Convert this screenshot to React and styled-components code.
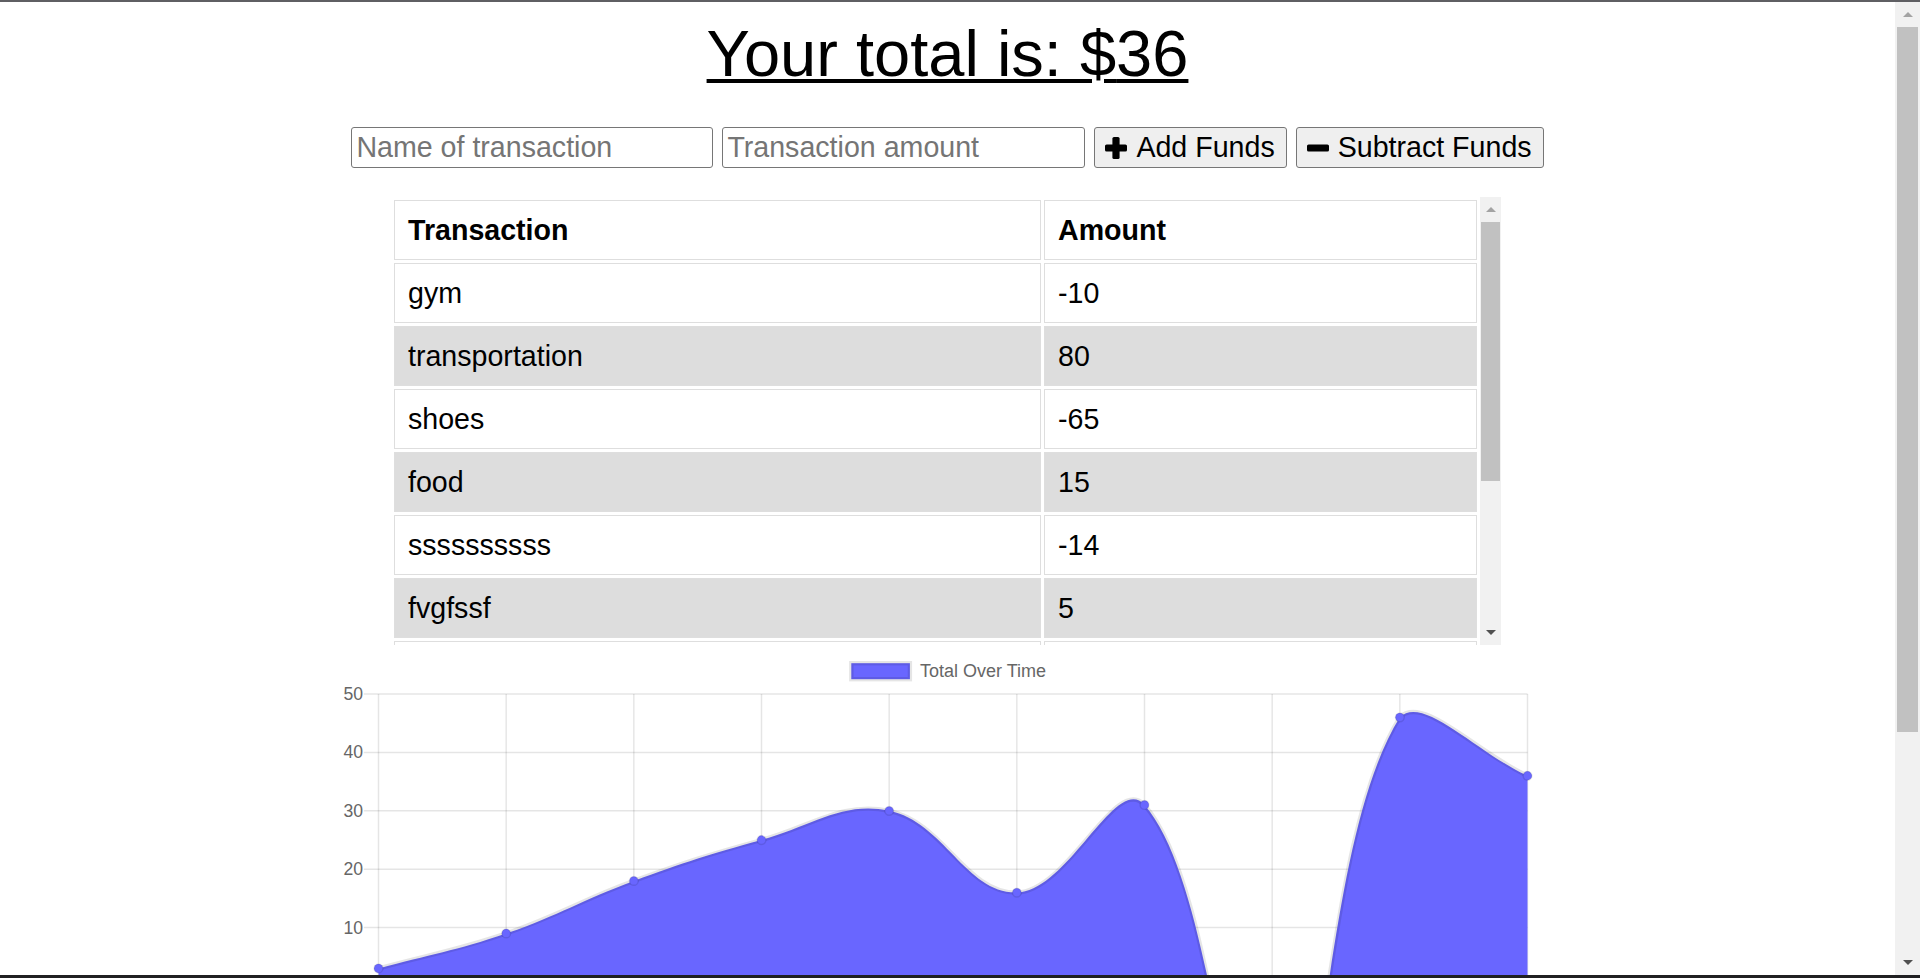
import React from 'react';
import styled, { createGlobalStyle } from 'styled-components';

const GlobalStyle = createGlobalStyle`
  html, body {
    margin: 0;
    padding: 0;
    height: 100%;
    overflow: hidden;
    background: #fff;
  }
  body {
    font-family: "Liberation Sans", Arial, sans-serif;
    color: #000;
  }
`;

// newest first, like the table shows them
const transactions = [
  { name: 'gym', value: -10 },
  { name: 'transportation', value: 80 },
  { name: 'shoes', value: -65 },
  { name: 'food', value: 15 },
  { name: 'ssssssssss', value: -14 },
  { name: 'fvgfssf', value: 5 },
  { name: 'lunch', value: 7 },
  { name: 'coffee', value: 9 },
  { name: 'books', value: 6 },
  { name: 'snack', value: 3 },
];

const total = transactions.reduce((sum, t) => sum + t.value, 0);

// chart geometry (chart.js look, scaled)
const K = 1.466;
const CHART = {
  width: 1220,
  height: 620,
  left: 40.5,
  right: 1189.5,
  top: 47,
  unit: 5.84,
  max: 50,
  min: -40,
};
const yOf = (v) => CHART.top + (CHART.max - v) * CHART.unit;
const chartBottom = yOf(CHART.min);

function buildSeries() {
  let running = 0;
  const totals = [...transactions].reverse().map((t) => (running += t.value));
  const step = (CHART.right - CHART.left) / (totals.length - 1);
  return totals.map((v, i) => ({ x: CHART.left + i * step, y: yOf(v) }));
}

const clamp = (v, lo, hi) => Math.min(hi, Math.max(lo, v));

function splinePath(pts, tension = 0.4) {
  const cps = pts.map((p, i) => {
    const prev = pts[i - 1] || p;
    const next = pts[i + 1] || p;
    const d01 = Math.hypot(p.x - prev.x, p.y - prev.y);
    const d12 = Math.hypot(next.x - p.x, next.y - p.y);
    const s01 = d01 + d12 ? d01 / (d01 + d12) : 0;
    const s12 = d01 + d12 ? d12 / (d01 + d12) : 0;
    const fa = tension * s01;
    const fb = tension * s12;
    const cap = (pt) => ({
      x: clamp(pt.x, CHART.left, CHART.right),
      y: clamp(pt.y, CHART.top, chartBottom),
    });
    return {
      prev: cap({ x: p.x - fa * (next.x - prev.x), y: p.y - fa * (next.y - prev.y) }),
      next: cap({ x: p.x + fb * (next.x - prev.x), y: p.y + fb * (next.y - prev.y) }),
    };
  });
  let d = `M ${pts[0].x} ${pts[0].y}`;
  for (let i = 1; i < pts.length; i++) {
    const a = cps[i - 1].next;
    const b = cps[i].prev;
    d += ` C ${a.x} ${a.y} ${b.x} ${b.y} ${pts[i].x} ${pts[i].y}`;
  }
  return d;
}

const Frame = styled.div`
  height: 100vh;
  display: flex;
  flex-direction: column;
`;

const TopEdge = styled.div`
  height: 2px;
  flex: none;
  background: #5f5f63;
`;

const BottomEdge = styled.div`
  height: 3px;
  flex: none;
  background: #202022;
`;

const Viewport = styled.div`
  flex: 1;
  min-height: 0;
  display: flex;
`;

const Page = styled.main`
  flex: 1;
  min-width: 0;
  overflow: hidden;
`;

const Title = styled.h1`
  margin: 15px 0 0;
  text-align: center;
  font-size: 65px;
  line-height: 74px;
  font-weight: 400;
  text-decoration: underline;
  text-decoration-thickness: 4px;
  text-underline-offset: 3px;
`;

const EntryRow = styled.form`
  margin: 36px 0 0;
  display: flex;
  justify-content: center;
  gap: 9px;
`;

const TextField = styled.input`
  box-sizing: border-box;
  width: ${(p) => p.$width}px;
  height: 41px;
  border: 1px solid #767676;
  border-radius: 3px;
  padding: 0 4px;
  font-family: "Liberation Sans", Arial, sans-serif;
  font-size: 28.6px;
  color: #000;
  background: #fff;
  outline: none;

  &::placeholder {
    color: #757575;
  }
`;

const ActionButton = styled.button`
  box-sizing: border-box;
  height: 41px;
  display: inline-flex;
  align-items: center;
  gap: 9px;
  padding: 0 11px 0 10px;
  border: 1px solid #767676;
  border-radius: 3px;
  background: #efefef;
  font-family: "Liberation Sans", Arial, sans-serif;
  font-size: 28.6px;
  color: #000;
  cursor: pointer;

  svg {
    flex: none;
    display: block;
  }
`;

const TableBox = styled.section`
  width: 1110px;
  height: 448px;
  margin: 29px auto 0;
  padding-right: 3px;
  display: flex;
`;

const TableViewport = styled.div`
  flex: 1;
  min-width: 0;
  overflow: hidden;
`;

const Table = styled.table`
  width: 100%;
  table-layout: fixed;
  border-collapse: separate;
  border-spacing: 3px;
  font-size: 28.6px;
`;

const NameCol = styled.col`
  width: 647px;
`;

const Cell = styled.td`
  border: 1px solid #dedede;
  padding: 12px 13px;
  line-height: 34px;
  text-align: left;
  vertical-align: middle;
  font-weight: ${(p) => (p.$head ? 700 : 400)};
  background: ${(p) => (p.$striped ? '#dddddd' : '#ffffff')};
  white-space: nowrap;
`;

const Rail = styled.div`
  flex: none;
  width: ${(p) => p.$width}px;
  display: flex;
  flex-direction: column;
  background: #f1f1f1;
`;

const RailButton = styled.div`
  flex: none;
  height: 25px;
  display: flex;
  align-items: center;
  justify-content: center;
`;

const Arrow = styled.span`
  width: 0;
  height: 0;
  border-left: 5px solid transparent;
  border-right: 5px solid transparent;
  ${(p) =>
    p.$up
      ? `border-bottom: 5px solid ${p.$color};`
      : `border-top: 5px solid ${p.$color};`}
`;

const RailTrack = styled.div`
  flex: 1;
  min-height: 0;
  padding: 0 ${(p) => p.$inset}px;
`;

const Thumb = styled.div`
  height: ${(p) => p.$length}px;
  background: #c1c1c1;
`;

const ChartCanvas = styled.svg`
  display: block;
  margin: 2px auto 0;
  font-family: "Liberation Sans", Arial, sans-serif;
`;

function PlusIcon() {
  return (
    <svg width="22" height="22" viewBox="0 0 22 22" aria-hidden="true">
      <rect x="7.4" y="0" width="7.2" height="22" rx="1.6" fill="#000" />
      <rect x="0" y="7.4" width="22" height="7.2" rx="1.6" fill="#000" />
    </svg>
  );
}

function MinusIcon() {
  return (
    <svg width="22" height="22" viewBox="0 0 22 22" aria-hidden="true">
      <rect x="0" y="7.4" width="22" height="7.2" rx="1.6" fill="#000" />
    </svg>
  );
}

function ScrollRail({ width, inset, thumb }) {
  return (
    <Rail $width={width}>
      <RailButton>
        <Arrow $up $color="#a3a3a3" />
      </RailButton>
      <RailTrack $inset={inset}>
        <Thumb $length={thumb} />
      </RailTrack>
      <RailButton>
        <Arrow $color="#505050" />
      </RailButton>
    </Rail>
  );
}

function TotalChart() {
  const pts = buildSeries();
  const line = splinePath(pts);
  const zeroY = yOf(0);
  const fill = `${line} L ${pts[pts.length - 1].x} ${zeroY} L ${pts[0].x} ${zeroY} Z`;
  const ticks = [];
  for (let v = CHART.max; v >= CHART.min; v -= 10) ticks.push(v);
  const grid = 'rgba(0,0,0,0.1)';
  const tick = 10 * K;

  return (
    <ChartCanvas width={CHART.width} height={CHART.height} viewBox={`0 0 ${CHART.width} ${CHART.height}`}>
      <rect x={513.3} y={16.2} width={58.6} height={16} fill="#6966ff" stroke={grid} strokeWidth={3 * K} />
      <text x={582} y={24} fontSize={18} fill="#666" dominantBaseline="central">
        Total Over Time
      </text>

      {ticks.map((v) => (
        <g key={v}>
          <line
            x1={CHART.left - tick}
            x2={CHART.right}
            y1={yOf(v)}
            y2={yOf(v)}
            stroke={v === 0 ? 'rgba(0,0,0,0.25)' : grid}
            strokeWidth={K}
          />
          <text x={25} y={yOf(v)} fontSize={17.6} fill="#666" textAnchor="end" dominantBaseline="central">
            {v}
          </text>
        </g>
      ))}
      {pts.map((p, i) => (
        <line key={i} x1={p.x} x2={p.x} y1={CHART.top} y2={chartBottom + tick} stroke={grid} strokeWidth={K} />
      ))}

      <path d={fill} fill="#6966ff" />
      <path d={line} fill="none" stroke={grid} strokeWidth={3 * K} />
      {pts.map((p, i) => (
        <circle key={i} cx={p.x} cy={p.y} r={3 * K} fill="#6966ff" stroke={grid} strokeWidth={K} />
      ))}
    </ChartCanvas>
  );
}

export default function App() {
  return (
    <>
      <GlobalStyle />
      <Frame>
        <TopEdge />
        <Viewport>
          <Page>
            <Title>Your total is: ${total}</Title>
            <EntryRow onSubmit={(e) => e.preventDefault()}>
              <TextField $width={362} type="text" placeholder="Name of transaction" />
              <TextField $width={363} type="number" placeholder="Transaction amount" />
              <ActionButton type="button">
                <PlusIcon />
                Add Funds
              </ActionButton>
              <ActionButton type="button">
                <MinusIcon />
                Subtract Funds
              </ActionButton>
            </EntryRow>

            <TableBox>
              <TableViewport>
                <Table>
                  <colgroup>
                    <NameCol />
                    <col />
                  </colgroup>
                  <thead>
                    <tr>
                      <Cell as="th" $head>Transaction</Cell>
                      <Cell as="th" $head>Amount</Cell>
                    </tr>
                  </thead>
                  <tbody>
                    {transactions.map((t, i) => (
                      <tr key={t.name}>
                        <Cell $striped={i % 2 === 1}>{t.name}</Cell>
                        <Cell $striped={i % 2 === 1}>{t.value}</Cell>
                      </tr>
                    ))}
                  </tbody>
                </Table>
              </TableViewport>
              <ScrollRail width={21} inset={1} thumb={259} />
            </TableBox>

            <TotalChart />
          </Page>
          <ScrollRail width={25} inset={2} thumb={705} />
        </Viewport>
        <BottomEdge />
      </Frame>
    </>
  );
}
